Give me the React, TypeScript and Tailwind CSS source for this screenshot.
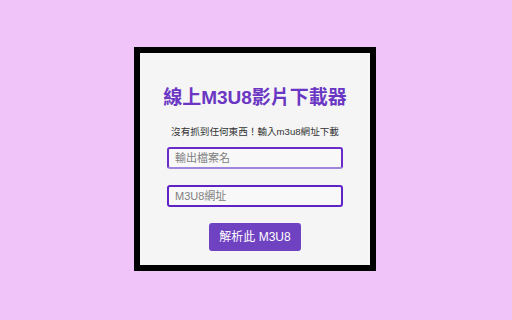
import type React from 'react';

const App: React.FC = () => {
  return (
    <div
      className="w-[512px] h-[320px] bg-[#f0c4f8] flex items-start justify-center"
      style={{ fontFamily: '"Liberation Sans", "Noto Sans CJK TC", sans-serif' }}
    >
      {/* Card */}
      <div className="mt-[47px] ml-[-2px] w-[242px] h-[224px] border-[6px] border-black bg-[#f5f5f5] flex flex-col items-center">
        <h1 className="mt-[31px] text-[19px] leading-[28px] font-bold text-[#6b36c4]">
          線上M3U8影片下載器
        </h1>
        <p className="mt-[13px] text-[9.6px] leading-[14px] text-[#333333]">
          沒有抓到任何東西！輸入m3u8網址下載
        </p>
        <input
          type="text"
          placeholder="輸出檔案名"
          className="mt-[8px] w-[176px] h-[22px] px-[6px] text-[11px] bg-[#f8f8f8] border-2 border-[#6a2cc8] border-b-[#9d86dc] rounded-[3px] outline-none placeholder:text-[#808080]"
        />
        <input
          type="text"
          placeholder="M3U8網址"
          className="mt-[16px] w-[176px] h-[22px] px-[6px] text-[11px] bg-[#f8f8f8] border-2 border-[#5f22c4] rounded-[3px] outline-none placeholder:text-[#808080]"
        />
        <button className="mt-[16px] w-[92px] h-[28px] rounded-[3px] bg-[#6f42c1] text-white text-[12px] font-normal">
          解析此 M3U8
        </button>
      </div>
    </div>
  );
};

export default App;
